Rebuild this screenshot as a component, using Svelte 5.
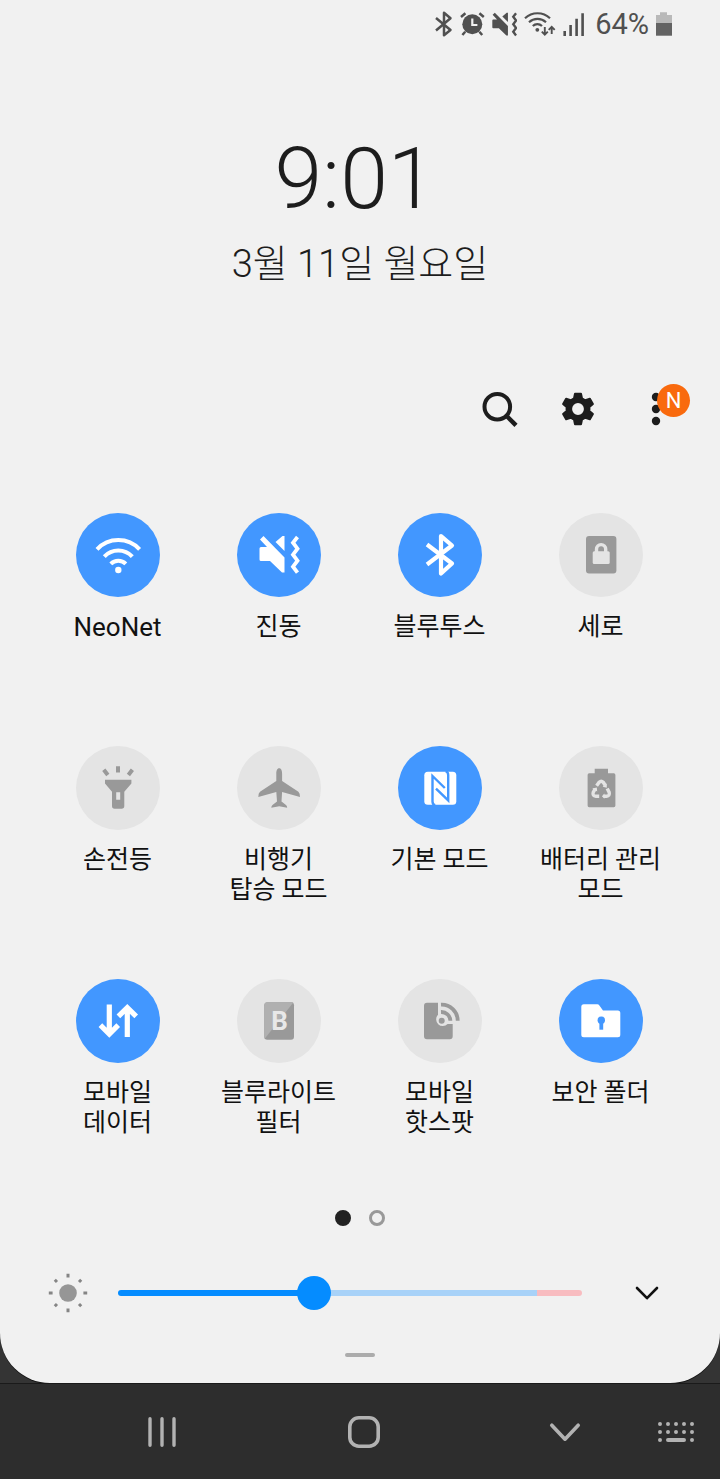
<script>
  let tiles = $state([
    { icon: 'wifi', lines: ['NeoNet'], on: true, latin: true },
    { icon: 'vibrate', lines: ['진동'], on: true },
    { icon: 'bluetooth', lines: ['블루투스'], on: true },
    { icon: 'portrait', lines: ['세로'], on: false },
    { icon: 'torch', lines: ['손전등'], on: false },
    { icon: 'plane', lines: ['비행기', '탑승 모드'], on: false },
    { icon: 'nfc', lines: ['기본 모드'], on: true },
    { icon: 'battery', lines: ['배터리 관리', '모드'], on: false },
    { icon: 'data', lines: ['모바일', '데이터'], on: true },
    { icon: 'bluelight', lines: ['블루라이트', '필터'], on: false },
    { icon: 'hotspot', lines: ['모바일', '핫스팟'], on: false },
    { icon: 'folder', lines: ['보안 폴더'], on: true }
  ]);
  const maxBrightness = 255;
  let brightness = $state(106);
  let fill = $derived((brightness / maxBrightness) * 100);
</script>

{#snippet vibrateShape()}
  <path fill="currentColor" d="M23 26.5 26.5 23 47.5 44.5V59.5H45L33 48H24Q22.5 48 22.5 46.5V35.5Q22.5 34 24 34H30Z" />
  <path fill="currentColor" d="M38.5 29 45.5 23H47.5V38Z" />
  <path fill="none" stroke="currentColor" stroke-width="3.8" d="M60.5 24 56 29.7 60.5 35.7 56 41.7 60.5 47.7 56 53.7 60.5 59.7" />
{/snippet}

{#snippet glyph(name)}
  <svg class="glyph" viewBox="0 0 84 84" aria-hidden="true">
    {#if name === 'wifi'}
      <g fill="none" stroke="currentColor" stroke-width="4">
        <path d="M21 36.3A29 29 0 0 1 63.6 36.3" />
        <path d="M28.3 43.6A19 19 0 0 1 56.3 43.6" />
        <path d="M34.8 50.8A10.5 10.5 0 0 1 49.8 50.8" />
      </g>
      <circle cx="42.3" cy="57" r="3.2" fill="currentColor" />
    {:else if name === 'vibrate'}
      {@render vibrateShape()}
    {:else if name === 'bluetooth'}
      <path fill="none" stroke="currentColor" stroke-width="4.2" stroke-linejoin="round" d="M29 31.5 54 50.5 43 60.5V23L54 32.5 29 51.5" />
    {:else if name === 'portrait'}
      <rect x="27" y="23" width="30.4" height="37.4" rx="3" fill="currentColor" />
      <rect x="33.7" y="38.3" width="17" height="12.7" rx="1.5" fill="#e4e4e4" />
      <path d="M37.5 39V36.2A4.6 4.6 0 0 1 46.7 36.2V39" fill="none" stroke="#e4e4e4" stroke-width="3.4" />
    {:else if name === 'torch'}
      <path fill="none" stroke="currentColor" stroke-width="4" d="M42 20.3V26.5M27.8 23.8 31.8 29M56.4 23.8 52.4 29" />
      <path fill="currentColor" fill-rule="evenodd" d="M29 33.7H55.4V37.5L48.3 45.7V60Q48.3 62.7 45.6 62.7H38.6Q36 62.7 36 60V45.7L29 37.5ZM40.2 46.3V53.8H44.2V46.3Z" />
    {:else if name === 'plane'}
      <path fill="currentColor" d="M42.2 22.3C40 22.3 39.3 25 39.3 28V35L23 45.8Q21.3 47 21.3 51L39.3 46 40 55.6 35.5 59Q34.3 60 34.3 61.8L42.2 60.2 50.2 61.8Q50.2 60 49 59L44.5 55.6 45.1 46 63 51Q63 47 61.4 45.8L45.1 35V28C45.1 25 44.4 22.3 42.2 22.3Z" />
    {:else if name === 'nfc'}
      <rect x="26.3" y="25.7" width="32" height="33" rx="3.5" fill="currentColor" />
      <path fill="none" stroke="#4297ff" stroke-width="2.4" d="M37.2 59.2Q34.5 58.5 34.5 55.5V30L46.8 42M47.6 25.2Q50.2 26 50.2 29V54.4L38 42.6" />
    {:else if name === 'battery'}
      <path fill="currentColor" d="M35.7 22.7H49V27.3H54.8Q56.4 27.3 56.4 29V59.6Q56.4 61.3 54.8 61.3H30.2Q28.6 61.3 28.6 59.6V29Q28.6 27.3 30.2 27.3H35.7Z" />
      <g fill="none" stroke="#e4e4e4" stroke-width="3.4">
        <path d="M37.6 39.8 40.2 36.2Q42.2 34.2 44.2 36.2L46.2 39.2" />
        <path d="M48.2 42.4 50.2 46.4Q51 50 47.6 50.2H44.8" />
        <path d="M40.2 50.2H36.8Q33.2 50 34.2 46.4L36 43.2" />
      </g>
      <path fill="#e4e4e4" d="M43.6 40.8 47.8 37.6 47.8 41.8ZM45.4 47.6V52.8L42.9 50.2ZM33.2 42.6 37.8 41.4 38.2 45.4Z" />
    {:else if name === 'data'}
      <g fill="none" stroke="currentColor" stroke-width="5.2">
        <path d="M33.3 25.5V55M24.4 46.2 33.3 55 42.2 46.2" />
        <path d="M51.3 58V29M42.4 37.4 51.3 28.6 60.2 37.4" />
      </g>
    {:else if name === 'bluelight'}
      <rect x="27.3" y="23.3" width="29.7" height="37.4" rx="3" fill="currentColor" />
      <path fill="#b0b0b0" d="M30.3 23.3H56.5L27.5 60V26.3Q27.3 23.3 30.3 23.3Z" />
      <text x="42.5" y="51" text-anchor="middle" class="letter">B</text>
    {:else if name === 'hotspot'}
      <path fill="currentColor" d="M29 23.7H40V35.8A6.6 6.6 0 1 0 49.6 45H54.7V57.3Q54.7 60.3 51.7 60.3H29Q26 60.3 26 57.3V26.7Q26 23.7 29 23.7Z" />
      <circle cx="43.7" cy="41.7" r="3" fill="currentColor" />
      <g fill="none" stroke="currentColor" stroke-width="3.8">
        <path d="M43 25.6A16 16 0 0 1 59.7 41.7" />
        <path d="M43 33A9 9 0 0 1 52.4 41.7" />
      </g>
    {:else}
      <path fill="currentColor" d="M24.8 25.3H38.3Q39.6 25.3 40.4 26.4L44 31.5H58.8Q61.3 31.5 61.3 34V55.8Q61.3 58.3 58.8 58.3H24.8Q22.3 58.3 22.3 55.8V27.8Q22.3 25.3 24.8 25.3Z" />
      <circle cx="42.3" cy="41.3" r="3.7" fill="#4297ff" />
      <path stroke="#4297ff" stroke-width="3.8" d="M42.3 42V50.7" />
    {/if}
  </svg>
{/snippet}

<div class="screen">
  <main class="panel">
    <div class="status">
      <svg width="18" height="26" viewBox="0 0 18 26" aria-hidden="true">
        <path fill="none" stroke="currentColor" stroke-width="2.5" stroke-linejoin="round" d="M1 7 15.5 19 9 24.2V1.8L15.5 7.3 1 19.5" />
      </svg>
      <svg width="25" height="26" viewBox="0 0 25 26" aria-hidden="true">
        <circle cx="12.3" cy="13.3" r="10" fill="currentColor" />
        <path fill="none" stroke="currentColor" stroke-width="2.5" d="M1 6 5.4 2.2M19.4 2.2 23.8 6M2.4 24 5.2 20.8M22.2 24 19.4 20.8" />
        <path fill="none" stroke="#f1f1f1" stroke-width="2.2" d="M12.3 7.6V14H17.4" />
      </svg>
      <svg width="25" height="25" viewBox="22 22 40 40" aria-hidden="true">
        {@render vibrateShape()}
      </svg>
      <svg width="32" height="26" viewBox="0 0 32 26" aria-hidden="true">
        <g fill="none" stroke="currentColor" stroke-width="2.2">
          <path d="M1 7.3A18 18 0 0 1 26 7.3" />
          <path d="M5 11.2A12.6 12.6 0 0 1 22 11.2" />
          <path d="M8.8 15A6.6 6.6 0 0 1 18 15" />
          <path d="M20.8 16V23.5M17.8 20.6 20.8 23.6 23.8 20.6M27.7 23V16M24.7 18.8 27.7 15.8 30.7 18.8" stroke-width="1.9" />
        </g>
        <circle cx="13.3" cy="18.8" r="1.9" fill="currentColor" />
      </svg>
      <svg width="22" height="26" viewBox="0 0 22 26" aria-hidden="true">
        <path stroke="currentColor" stroke-width="2.6" d="M1.7 20V25M7.6 14V25M13.6 7.8V25M19.6 2.3V25" />
      </svg>
      <span class="percent">64%</span>
      <svg width="16" height="26" viewBox="0 0 16 26" aria-hidden="true">
        <path fill="#b9b9b9" d="M4 1.3H11V4H16V12H0V4H4Z" />
        <rect y="12" width="16" height="12.7" fill="#636363" />
      </svg>
    </div>

    <header>
      <time class="clock">9:01</time>
      <p class="date">3월 11일 월요일</p>
    </header>

    <div class="tools">
      <button aria-label="검색">
        <svg width="40" height="40" viewBox="0 0 40 40" aria-hidden="true">
          <circle cx="17.3" cy="17.7" r="12.8" fill="none" stroke="currentColor" stroke-width="4" />
          <path stroke="currentColor" stroke-width="4.4" d="M26.4 26.8 36 36.4" />
        </svg>
      </button>
      <button aria-label="설정">
        <svg width="40" height="40" viewBox="0 0 40 40" aria-hidden="true">
          <path fill="currentColor" stroke="currentColor" stroke-width="2" stroke-linejoin="round" fill-rule="evenodd" d="M17 4.8H23L24 9.4 27.3 11.3 31.9 9.8 34.9 15 31.4 18.1V21.9L34.9 25 31.9 30.2 27.3 28.7 24 30.6 23 35.2H17L16 30.6 12.7 28.7 8.1 30.2 5.1 25 8.6 21.9V18.1L5.1 15 8.1 9.8 12.7 11.3 16 9.4ZM20 13.1A6.9 6.9 0 1 0 20 26.9 6.9 6.9 0 1 0 20 13.1Z" />
        </svg>
      </button>
      <button aria-label="더보기">
        <svg width="40" height="40" viewBox="0 0 40 40" aria-hidden="true">
          <g fill="currentColor">
            <circle cx="20" cy="8" r="4.2" />
            <circle cx="20" cy="20" r="4.2" />
            <circle cx="20" cy="32" r="4.2" />
          </g>
        </svg>
        <span class="badge">N</span>
      </button>
    </div>

    <div class="tiles">
      {#each tiles as tile}
        <button class="tile" class:on={tile.on} aria-pressed={tile.on} onclick={() => (tile.on = !tile.on)}>
          <span class="disc">{@render glyph(tile.icon)}</span>
          <span class="label" class:latin={tile.latin}>
            {#each tile.lines as line}<span>{line}</span>{/each}
          </span>
        </button>
      {/each}
    </div>

    <div class="pager">
      <button class="dot current" aria-label="1페이지"></button>
      <button class="dot" aria-label="2페이지"></button>
    </div>

    <div class="brightness">
      <svg width="40" height="40" viewBox="0 0 40 40" aria-hidden="true">
        <circle cx="20" cy="20" r="8.8" fill="#969696" />
        <g stroke="#858585" stroke-width="3">
          <path d="M20 .8V4.4M20 35.6V39.2M.8 20H4.6M35.4 20H39.2" />
          <path d="M6.8 6.8 9 9M31 31 33.2 33.2M33.2 6.8 31 9M9 31 6.8 33.2" />
        </g>
      </svg>
      <input type="range" min="0" max={maxBrightness} aria-label="밝기" bind:value={brightness} style="--fill: {fill}%" />
      <button class="expand" aria-label="밝기 옵션">
        <svg width="24" height="24" viewBox="0 0 24 24" aria-hidden="true">
          <path fill="none" stroke="currentColor" stroke-width="2.6" stroke-linecap="round" stroke-linejoin="round" d="M2 7 12 17.2 22 7" />
        </svg>
      </button>
    </div>

    <div class="handle"></div>
  </main>

  <nav>
    <div class="keys">
      <button aria-label="최근 앱">
        <svg width="40" height="40" viewBox="0 0 40 40" aria-hidden="true">
          <path stroke="currentColor" stroke-width="3.4" stroke-linecap="round" d="M8 6.8V33.2M20 6.8V33.2M32 6.8V33.2" />
        </svg>
      </button>
      <button aria-label="홈">
        <svg width="40" height="40" viewBox="0 0 40 40" aria-hidden="true">
          <rect x="5.8" y="5.8" width="28.4" height="28.4" rx="9" fill="none" stroke="currentColor" stroke-width="3.6" />
        </svg>
      </button>
      <button aria-label="뒤로">
        <svg width="40" height="40" viewBox="0 0 40 40" aria-hidden="true">
          <path fill="none" stroke="currentColor" stroke-width="3.6" stroke-linecap="round" stroke-linejoin="round" d="M6.8 13.2 20 27.2 33.2 13.2" />
        </svg>
      </button>
    </div>
    <button aria-label="키보드">
      <svg width="40" height="24" viewBox="0 0 40 24" aria-hidden="true">
        <g stroke="currentColor" stroke-width="4" stroke-linecap="round" fill="none">
          <path d="M4 4h0M12 4h0M20 4h0M28 4h0M36 4h0M4 12h0M12 12h0M20 12h0M28 12h0M36 12h0M4 20h0M12 20H28M36 20h0" />
        </g>
      </svg>
    </button>
  </nav>
</div>

<style>
  :global(body) {
    margin: 0;
    background: #343434;
  }

  .screen {
    display: flex;
    flex-direction: column;
    min-height: 100vh;
    background: #343434;
    color: #1d1d1d;
    font-family: Roboto, "Noto Sans CJK KR", sans-serif;
  }

  button {
    display: flex;
    align-items: center;
    justify-content: center;
    padding: 0;
    border: 0;
    background: none;
    color: inherit;
    font: inherit;
    cursor: pointer;
  }

  svg {
    display: block;
    flex: none;
  }

  .panel {
    display: flex;
    flex: 1;
    flex-direction: column;
    border-radius: 0 0 50px 50px;
    background: #f1f1f1;
    box-shadow: 0 1px 0 #151515;
  }

  .status {
    display: flex;
    align-items: center;
    justify-content: flex-end;
    gap: 7px;
    height: 48px;
    padding-right: 48px;
    color: #505050;
  }

  .percent {
    margin-left: 3px;
    font-size: 29px;
    line-height: 36px;
  }

  header {
    display: flex;
    flex-direction: column;
    align-items: center;
    gap: 8px;
    padding-top: 78px;
  }

  .clock {
    padding-right: 10px;
    font-size: 86px;
    font-weight: 300;
    line-height: 106px;
  }

  .date {
    margin: 0;
    font-size: 38px;
    font-weight: 300;
    line-height: 48px;
  }

  .tools {
    display: flex;
    justify-content: flex-end;
    gap: 30px;
    padding: 97px 40px 80px;
  }

  .tools button {
    position: relative;
    width: 48px;
    height: 48px;
  }

  .badge {
    position: absolute;
    top: -1px;
    left: 25px;
    width: 33px;
    border-radius: 50%;
    background: #f96a0e;
    color: #fff;
    font-size: 22px;
    line-height: 33px;
    text-align: center;
  }

  .tiles {
    display: grid;
    grid-template-columns: repeat(4, 1fr);
    grid-auto-rows: minmax(213px, auto);
    row-gap: 20px;
    padding: 0 39px 0 37px;
  }

  .tile {
    flex-direction: column;
    justify-content: flex-start;
    gap: 15px;
  }

  .disc {
    width: 84px;
    height: 84px;
    border-radius: 50%;
    background: #e4e4e4;
    color: #999;
  }

  .on .disc {
    background: #4297ff;
    color: #fff;
  }

  .glyph {
    width: 100%;
    height: 100%;
  }

  .letter {
    fill: #e8e8e8;
    font-size: 26px;
    font-weight: 700;
  }

  .label {
    display: flex;
    flex-direction: column;
    align-items: center;
    color: #111;
    font-size: 25px;
    line-height: 30px;
    white-space: nowrap;
  }

  .latin {
    font-size: 26px;
  }

  .pager {
    display: flex;
    justify-content: center;
    gap: 18px;
    padding-top: 18px;
  }

  .dot {
    box-sizing: border-box;
    width: 16px;
    height: 16px;
    border: 3px solid #999;
    border-radius: 50%;
  }

  .current {
    border-color: #222;
    background: #222;
  }

  .brightness {
    display: flex;
    align-items: center;
    padding: 43px 49px 0 48px;
  }

  input {
    flex: 1;
    min-width: 0;
    height: 48px;
    margin: 0 41px 0 30px;
    appearance: none;
    background: none;
    cursor: pointer;
  }

  input::-webkit-slider-runnable-track {
    height: 6px;
    border-radius: 3px;
    background: linear-gradient(
      to right,
      #058cff var(--fill),
      #a8d2f8 var(--fill),
      #a8d2f8 90.3%,
      #f8bcc0 90.3%
    );
  }

  input::-webkit-slider-thumb {
    width: 34px;
    height: 34px;
    margin-top: -14px;
    appearance: none;
    border-radius: 50%;
    background: #058cff;
  }

  .expand {
    width: 48px;
    height: 48px;
    color: #111;
  }

  .handle {
    align-self: center;
    width: 30px;
    height: 4px;
    margin: 36px 0 26px;
    border-radius: 2px;
    background: #acacac;
  }

  nav {
    display: flex;
    box-sizing: border-box;
    align-items: center;
    height: 96px;
    padding: 0 16px 0 134px;
    border-top: 1px solid #1a1a1a;
    background: #2d2d2d;
    color: #b2b2b2;
  }

  .keys {
    display: flex;
    flex: 1;
    justify-content: space-between;
    margin-right: 55px;
  }

  nav button {
    width: 56px;
    height: 56px;
  }
</style>
